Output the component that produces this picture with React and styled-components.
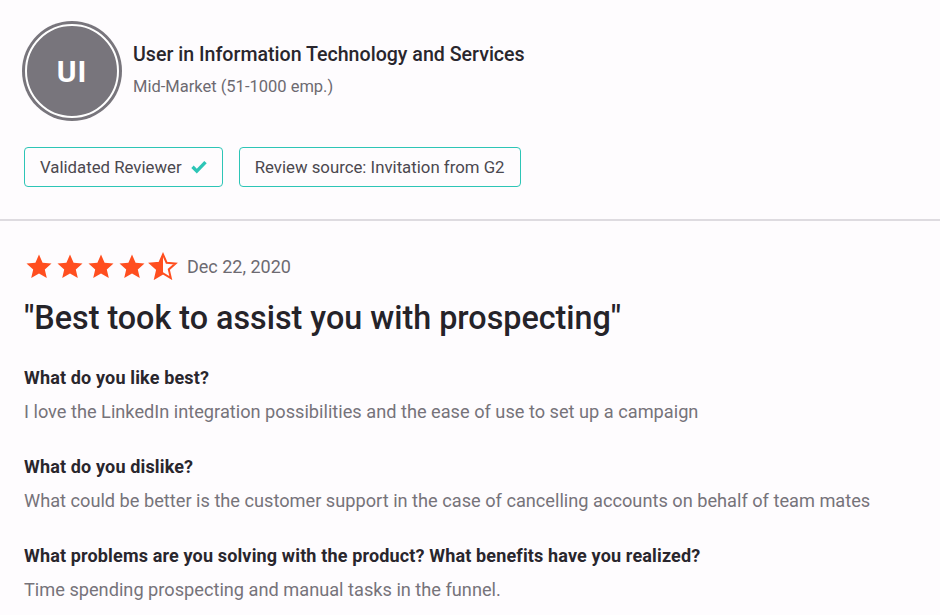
import styled, { createGlobalStyle } from "styled-components";

const GlobalStyle = createGlobalStyle`
  html, body {
    margin: 0;
    padding: 0;
    background: #fefcfe;
    font-family: Roboto, "Liberation Sans", sans-serif;
    color: #29262d;
  }
`;

const Card = styled.div`
  width: 940px;
  height: 615px;
  overflow: hidden;
`;

const Header = styled.section`
  padding: 21px 24px 32px;
  border-bottom: 2px solid #dedbe0;
`;

const UserRow = styled.div`
  display: flex;
  align-items: flex-start;
  gap: 14px;
`;

const Avatar = styled.div`
  width: 90px;
  height: 90px;
  border-radius: 50%;
  background: #78757c;
  border: 2px solid #fff;
  box-shadow: 0 0 0 3px #78757c;
  margin: 3px 0 0 1px;
  display: flex;
  align-items: center;
  justify-content: center;
  color: #fff;
  font-size: 30px;
  font-weight: 700;
  letter-spacing: 1px;
  box-sizing: content-box;
  flex-shrink: 0;
`;

const UserInfo = styled.div`
  display: flex;
  flex-direction: column;
  gap: 11px;
  padding-top: 22px;
`;

const UserName = styled.div`
  font-size: 19.6px;
  font-weight: 500;
  color: #29262d;
`;

const UserMeta = styled.div`
  font-size: 16.5px;
  color: #6d6a71;
`;

const Badges = styled.div`
  display: flex;
  gap: 16px;
  margin-top: 29px;
`;

const Badge = styled.div`
  display: flex;
  align-items: center;
  gap: 9px;
  height: 40px;
  box-sizing: border-box;
  padding: 0 15px;
  border: 1.5px solid #2dc5b6;
  border-radius: 4px;
  font-size: 16.8px;
  color: #4b484f;
`;

const Body = styled.section`
  padding: 31px 24px 0;
`;

const RatingRow = styled.div`
  display: flex;
  align-items: center;
  gap: 9px;
`;

const Stars = styled.div`
  display: flex;
  gap: 1px;
`;

const DateText = styled.span`
  font-size: 18px;
  color: #6d6a71;
`;

const Headline = styled.h1`
  margin: 19px 0 0;
  font-size: 32.3px;
  font-weight: 500;
  color: #252329;
`;

const QAList = styled.div`
  display: flex;
  flex-direction: column;
  gap: 34px;
  margin-top: 30px;
`;

const Question = styled.h3`
  margin: 0;
  font-size: 18px;
  font-weight: 700;
  letter-spacing: 0.15px;
  color: #29262d;
`;

const Answer = styled.p`
  margin: 13px 0 0;
  font-size: 18.2px;
  color: #76737a;
`;

function Star({ half }) {
  const d =
    "M15 2.5l3.6 8.2 8.9.8-6.7 5.9 2 8.7L15 21.5l-7.8 4.6 2-8.7-6.7-5.9 8.9-.8z";
  return (
    <svg width="30" height="28" viewBox="0 0 30 28">
      {half ? (
        <>
          <defs>
            <clipPath id="halfclip">
              <rect x="0" y="0" width="15" height="28" />
            </clipPath>
          </defs>
          <path d={d} fill="none" stroke="#ff4e1f" strokeWidth="2" strokeLinejoin="miter" />
          <path d={d} fill="#ff4e1f" clipPath="url(#halfclip)" />
        </>
      ) : (
        <path d={d} fill="#ff4e1f" />
      )}
    </svg>
  );
}

const qa = [
  {
    q: "What do you like best?",
    a: "I love the LinkedIn integration possibilities and the ease of use to set up a campaign",
  },
  {
    q: "What do you dislike?",
    a: "What could be better is the customer support in the case of cancelling accounts on behalf of team mates",
  },
  {
    q: "What problems are you solving with the product? What benefits have you realized?",
    a: "Time spending prospecting and manual tasks in the funnel.",
  },
];

export default function App() {
  return (
    <Card>
      <GlobalStyle />
      <Header>
        <UserRow>
          <Avatar>UI</Avatar>
          <UserInfo>
            <UserName>User in Information Technology and Services</UserName>
            <UserMeta>Mid-Market (51-1000 emp.)</UserMeta>
          </UserInfo>
        </UserRow>
        <Badges>
          <Badge>
            Validated Reviewer
            <svg width="16" height="14" viewBox="0 0 16 14">
              <path d="M1.5 6.8l4.3 4.3 8.7-9" fill="none" stroke="#2dc5b6" strokeWidth="3.4" />
            </svg>
          </Badge>
          <Badge>Review source: Invitation from G2</Badge>
        </Badges>
      </Header>
      <Body>
        <RatingRow>
          <Stars>
            <Star />
            <Star />
            <Star />
            <Star />
            <Star half />
          </Stars>
          <DateText>Dec 22, 2020</DateText>
        </RatingRow>
        <Headline>"Best took to assist you with prospecting"</Headline>
        <QAList>
          {qa.map((item) => (
            <div key={item.q}>
              <Question>{item.q}</Question>
              <Answer>{item.a}</Answer>
            </div>
          ))}
        </QAList>
      </Body>
    </Card>
  );
}
